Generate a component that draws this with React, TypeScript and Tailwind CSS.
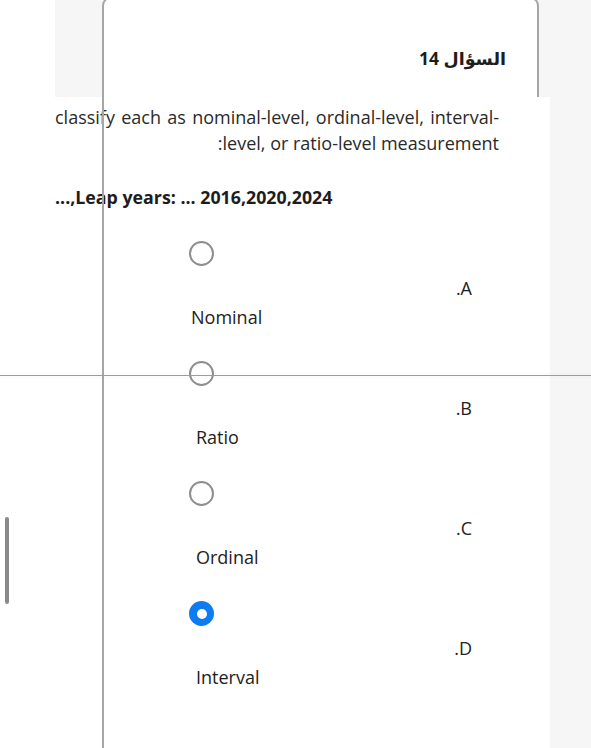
import React from "react";

const options = [
  { letter: ".A", text: "Nominal", selected: false, indent: "ml-[136px]" },
  { letter: ".B", text: "Ratio", selected: false, indent: "ml-[141px]" },
  { letter: ".C", text: "Ordinal", selected: false, indent: "ml-[141px]" },
  { letter: ".D", text: "Interval", selected: true, indent: "ml-[141px]" },
];

function Radio({ selected }: { selected: boolean }) {
  if (selected) {
    return (
      <div className="w-[25px] h-[25px] rounded-full bg-[#0f7bf0] flex items-center justify-center">
        <div className="w-[10px] h-[10px] rounded-full bg-white" />
      </div>
    );
  }
  return <div className="w-[25px] h-[25px] rounded-full border-2 border-[#8e8e8e] bg-white" />;
}

export default function App() {
  return (
    <div
      className="relative w-[591px] h-[748px] overflow-hidden bg-white text-[#222]"
      style={{ fontFamily: '"Open Sans", "DejaVu Sans", sans-serif' }}
    >
      <div className="ml-[55px] h-full bg-[#f6f6f6] flex flex-col">
        {/* card header area */}
        <div className="h-[97px] shrink-0 pl-[47px]">
          <div className="w-[437px] h-[101px] -mt-[4px] rounded-t-[10px] border-2 border-b-0 border-[#a6a6a6] bg-white">
            <div
              dir="rtl"
              className="pt-[46px] pr-[31px] text-[17.5px] leading-[28px] font-bold text-[#1d1d1d]"
            >
              السؤال 14
            </div>
          </div>
        </div>

        {/* white content panel */}
        <div className="w-[495px] flex-1 bg-white pt-[7px]">
          <div className="pr-[51px] text-[18px] leading-[26px] text-[#2a2a2a]">
            <div className="text-justify [text-align-last:justify]">
              classify each as nominal-level, ordinal-level, interval-
            </div>
            <div className="text-right">:level, or ratio-level measurement</div>
          </div>

          <div className="mt-[29px] text-[17.8px] leading-[24px] font-bold text-[#1d1d1d]">
            ...,Leap years: ... 2016,2020,2024
          </div>

          <div className="mt-[32px] flex flex-col">
            {options.map((o) => (
              <div key={o.letter} className="h-[120px] flex flex-col">
                <div className="ml-[134px]">
                  <Radio selected={o.selected} />
                </div>
                <div className="mt-[10px] pr-[78px] text-right text-[18px] leading-[24px] text-[#222]">
                  {o.letter}
                </div>
                <div className={`mt-[5px] ${o.indent} text-[18px] leading-[24px] text-[#222]`}>
                  {o.text}
                </div>
              </div>
            ))}
          </div>
        </div>
      </div>

      {/* overlay: card left border line continuing over the panel */}
      <div className="absolute left-[102px] top-[90px] bottom-0 w-[2px] bg-[#a6a6a6]" />

      {/* overlay: horizontal rule */}
      <div className="absolute left-0 right-0 top-[375px] h-[1px] bg-[#9c9c9c] shadow-[0_-2px_2px_rgba(0,0,0,0.04),0_2px_2px_rgba(0,0,0,0.04)]" />

      {/* overlay: scroll indicator */}
      <div className="absolute left-[5px] top-[517px] w-[4px] h-[87px] rounded-full bg-[#8a8a8a]" />
    </div>
  );
}
